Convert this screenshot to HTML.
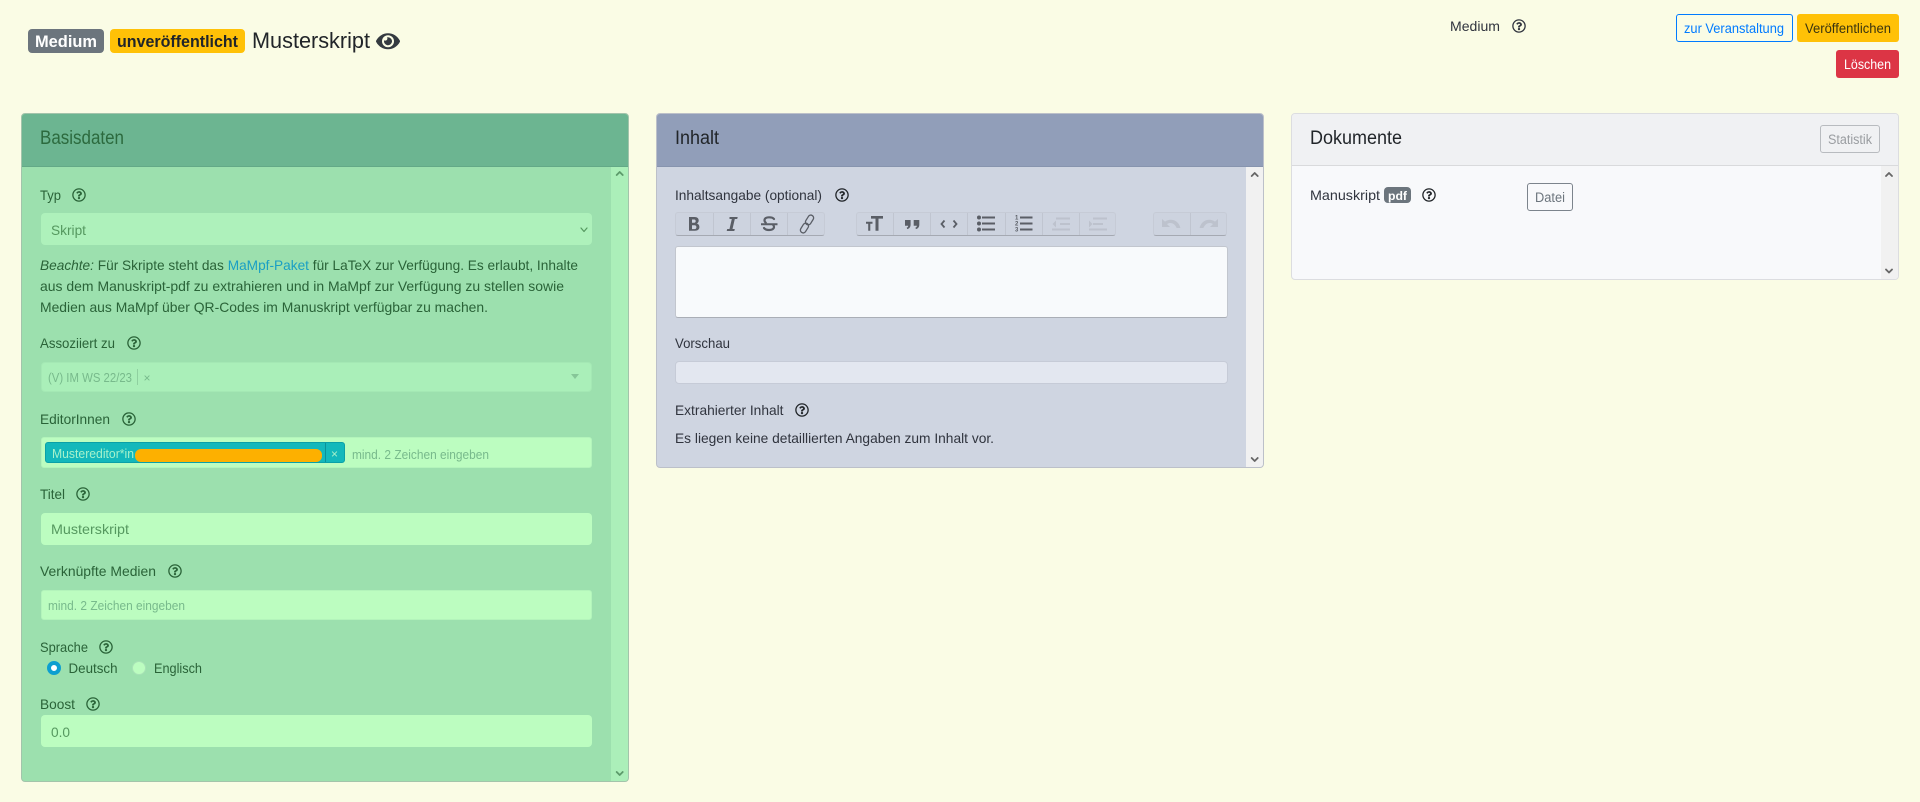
<!DOCTYPE html>
<html lang="de">
<head>
<meta charset="utf-8">
<title>Musterskript</title>
<style>
html,body{margin:0;padding:0;width:1920px;height:802px;overflow:hidden;background:#fafce5}
.b{position:absolute;box-sizing:border-box}
svg.o{position:absolute;left:0;top:0}
text{font-family:"Liberation Sans",sans-serif;font-size:14px}
.lg{fill:#2a6338}
.lb{fill:#30343e}
.ph{fill:#78ba8c;font-size:12.5px}
.val{fill:#55985f}
.c{fill:none;stroke-width:1.8;stroke-linecap:round;stroke-linejoin:round}
</style>
</head>
<body>
<!-- header bits -->
<div class="b" style="left:28px;top:29px;width:76px;height:24px;background:#6c757d;border-radius:4px"></div>
<div class="b" style="left:110px;top:29px;width:135px;height:24px;background:#ffc107;border-radius:4px"></div>
<div class="b" style="left:1676px;top:14px;width:117px;height:28px;border:1px solid #007bff;border-radius:3px"></div>
<div class="b" style="left:1797px;top:14px;width:102px;height:28px;background:#ffc107;border-radius:3px"></div>
<div class="b" style="left:1836px;top:50px;width:63px;height:28px;background:#dc3545;border-radius:3px"></div>

<!-- Basisdaten card -->
<div class="b" style="left:21px;top:113px;width:608px;height:669px;background:#9ce0ae;border:1px solid #a3c4ab;border-radius:4px;overflow:hidden">
  <div class="b" style="left:0;top:0;width:606px;height:52.500px;background:#6cb591;border-bottom:1px solid #63a987"></div>
  <div class="b" style="left:589px;top:52.500px;width:17px;height:615px;background:#abefb9"></div>
</div>
<div class="b" style="left:41px;top:213px;width:551px;height:32px;background:#aef1bb;border-radius:4px"></div>
<div class="b" style="left:41px;top:362px;width:551px;height:30px;background:#aaefb9;border:1px solid #a4e8b4;border-radius:4px"></div>
<div class="b" style="left:41px;top:437px;width:551px;height:31px;background:#bcfdc0;border:1px solid #b3f4bb;border-radius:3px"></div>
<div class="b" style="left:45px;top:442px;width:300px;height:21px;background:#13b8bb;border:1px solid #0aa0a8;border-radius:3px"></div>
<div class="b" style="left:325px;top:443px;width:1px;height:19px;background:#0a9098"></div>
<div class="b" style="left:135px;top:449px;width:187px;height:13px;background:#fdb000;border-radius:6px"></div>
<div class="b" style="left:41px;top:513px;width:551px;height:32px;background:#bcfdc0;border-radius:4px"></div>
<div class="b" style="left:41px;top:590px;width:551px;height:30px;background:#bcfdc0;border:1px solid #b3f4bb;border-radius:3px"></div>
<div class="b" style="left:47px;top:661px;width:14px;height:14px;background:#fff;border:4px solid #0d9fd0;border-radius:50%"></div>
<div class="b" style="left:132px;top:661px;width:14px;height:14px;background:#bcfdc0;border:1px solid #a8e2b6;border-radius:50%"></div>
<div class="b" style="left:41px;top:715px;width:551px;height:32px;background:#bcfdc0;border-radius:4px"></div>

<!-- Inhalt card -->
<div class="b" style="left:656px;top:113px;width:608px;height:355px;background:#cfd5e1;border:1px solid #bcc0c9;border-radius:4px;overflow:hidden">
  <div class="b" style="left:0;top:0;width:606px;height:52.500px;background:#919eb9;border-bottom:1px solid #8794ae"></div>
  <div class="b" style="left:589px;top:52.500px;width:17px;height:301px;background:#f1f1f1"></div>
</div>
<div class="b" style="left:675px;top:212px;width:150px;height:24px;background:#cdd3df;border:1px solid #c6cbd6;border-bottom:1px solid #a5a9b2;border-radius:3px"></div>
<div class="b" style="left:856px;top:212px;width:260px;height:24px;background:#cdd3df;border:1px solid #c6cbd6;border-bottom:1px solid #a5a9b2;border-radius:3px"></div>
<div class="b" style="left:1153px;top:212px;width:74px;height:24px;background:#cdd3df;border:1px solid #c6cbd6;border-bottom:1px solid #a5a9b2;border-radius:3px"></div>
<div class="b" style="left:675px;top:246px;width:553px;height:72px;background:#f8fafc;border:1px solid #c2c6ce;border-bottom-color:#aaaeb6;border-radius:3px"></div>
<div class="b" style="left:675px;top:361px;width:553px;height:23px;background:#e3e7f0;border:1px solid #c6cbd7;border-radius:4px"></div>

<!-- Dokumente card -->
<div class="b" style="left:1291px;top:113px;width:608px;height:167px;background:#f8f9fb;border:1px solid #dcdde0;border-radius:4px;overflow:hidden">
  <div class="b" style="left:0;top:0;width:606px;height:52px;background:#f0f1f3;border-bottom:1px solid #d9dadc"></div>
  <div class="b" style="left:589px;top:52px;width:17px;height:113px;background:#f1f1f1"></div>
</div>
<div class="b" style="left:1820px;top:125px;width:60px;height:28px;border:1px solid #b8bbbf;border-radius:3px"></div>
<div class="b" style="left:1384px;top:187px;width:27px;height:16px;background:#6c757d;border-radius:4px"></div>
<div class="b" style="left:1527px;top:183px;width:46px;height:28px;border:1px solid #7c848c;border-radius:3px"></div>

<svg class="o" width="1920" height="802" viewBox="0 0 1920 802" xmlns="http://www.w3.org/2000/svg">
<defs>
<symbol id="q" viewBox="0 0 512 512"><path fill="currentColor" d="M256 8C119 8 8 119 8 256s111 248 248 248 248-111 248-248S393 8 256 8zm0 448c-110.5 0-200-89.5-200-200S145.5 56 256 56s200 89.5 200 200-89.5 200-200 200zm107.2-255.2c0 67-72.4 68.1-72.4 92.8V300c0 6.6-5.4 12-12 12h-45.6c-6.6 0-12-5.4-12-12v-8.7c0-35.6 27-49.8 47.4-61.3 17.5-9.8 28.2-16.5 28.2-29.5 0-17.2-21.9-28.6-39.7-28.6-23.2 0-33.9 11-49 30-4.1 5.1-11.5 6.1-16.7 2.1l-27.8-21.1c-5.1-3.9-6.3-11.1-2.6-16.4C184.8 131.5 214.9 112 261.8 112c49.1 0 101.4 38.3 101.4 88.8zM298 368c0 23.2-18.8 42-42 42s-42-18.8-42-42 18.8-42 42-42 42 18.8 42 42z"/></symbol>
</defs>

<!-- header -->
<text x="35" y="47" textLength="62" lengthAdjust="spacingAndGlyphs" style="font-size:16.5px;font-weight:bold;fill:#fff">Medium</text>
<text x="117" y="47" textLength="121" lengthAdjust="spacingAndGlyphs" style="font-size:16.5px;font-weight:bold;fill:#212529">unveröffentlicht</text>
<text x="252" y="48" textLength="118" lengthAdjust="spacingAndGlyphs" style="font-size:22px;fill:#212529">Musterskript</text>
<path transform="translate(376 30.6) scale(.0417)" fill="#343a40" d="M572.52 241.4C518.29 135.59 410.93 64 288 64S57.68 135.64 3.48 241.41a32.35 32.35 0 0 0 0 29.19C57.71 376.41 165.07 448 288 448s230.32-71.64 284.52-177.41a32.35 32.35 0 0 0 0-29.19zM288 400a144 144 0 1 1 144-144 143.93 143.93 0 0 1-144 144zm0-240a95.31 95.31 0 0 0-25.31 3.79 47.85 47.85 0 0 1-66.9 66.9A95.78 95.78 0 1 0 288 160z"/>
<text x="1450" y="31" textLength="50" lengthAdjust="spacingAndGlyphs" class="lb">Medium</text>
<use href="#q" x="1512" y="19" width="14" height="14" color="#30343e"/>
<text x="1684" y="33" textLength="100" lengthAdjust="spacingAndGlyphs" style="font-size:13.500px;fill:#007bff">zur Veranstaltung</text>
<text x="1805" y="33" textLength="86" lengthAdjust="spacingAndGlyphs" style="font-size:13.500px;fill:#3a3410">Veröffentlichen</text>
<text x="1844" y="69" textLength="47" lengthAdjust="spacingAndGlyphs" style="font-size:13.500px;fill:#fff">Löschen</text>

<!-- Basisdaten -->
<text x="40" y="144" textLength="84" lengthAdjust="spacingAndGlyphs" style="font-size:19px;fill:#2c6a3e">Basisdaten</text>
<text x="40" y="200" textLength="21" lengthAdjust="spacingAndGlyphs" class="lg">Typ</text>
<use href="#q" x="72" y="188" width="14" height="14" color="#2a6338"/>
<text x="51" y="235" textLength="35" lengthAdjust="spacingAndGlyphs" class="val">Skript</text>
<path class="c" stroke="#55985f" style="stroke-width:1.2" d="M581 228l3 3.500 3-3.500"/>
<text x="40" y="270" textLength="538" lengthAdjust="spacingAndGlyphs" class="lg"><tspan font-style="italic">Beachte:</tspan> Für Skripte steht das <tspan fill="#1a9fc4">MaMpf-Paket</tspan> für LaTeX zur Verfügung. Es erlaubt, Inhalte</text>
<text x="40" y="291" textLength="524" lengthAdjust="spacingAndGlyphs" class="lg">aus dem Manuskript-pdf zu extrahieren und in MaMpf zur Verfügung zu stellen sowie</text>
<text x="40" y="312" textLength="448" lengthAdjust="spacingAndGlyphs" class="lg">Medien aus MaMpf über QR-Codes im Manuskript verfügbar zu machen.</text>

<text x="40" y="348" textLength="75" lengthAdjust="spacingAndGlyphs" class="lg">Assoziiert zu</text>
<use href="#q" x="127" y="336" width="14" height="14" color="#2a6338"/>
<text x="48" y="382" textLength="84" lengthAdjust="spacingAndGlyphs" style="font-size:12.500px;fill:#78ba8c">(V) IM WS 22/23</text>
<rect x="137" y="369" width="1" height="16" fill="#8fd0a0"/>
<text x="143.500" y="382" style="font-size:12px;fill:#78ba8c">×</text>
<path d="M571 374h8l-4 5z" fill="#86c698"/>

<text x="40" y="424" textLength="70" lengthAdjust="spacingAndGlyphs" class="lg">EditorInnen</text>
<use href="#q" x="122" y="412" width="14" height="14" color="#2a6338"/>
<text x="52" y="458" textLength="82" lengthAdjust="spacingAndGlyphs" style="font-size:12.500px;fill:#a5f2cb">Mustereditor*in</text>
<text x="331" y="458" style="font-size:12px;fill:#a5f2cb">×</text>
<text x="352" y="459" textLength="137" lengthAdjust="spacingAndGlyphs" class="ph">mind. 2 Zeichen eingeben</text>

<text x="40" y="499" textLength="25" lengthAdjust="spacingAndGlyphs" class="lg">Titel</text>
<use href="#q" x="76" y="487" width="14" height="14" color="#2a6338"/>
<text x="51" y="534" textLength="78" lengthAdjust="spacingAndGlyphs" class="val">Musterskript</text>

<text x="40" y="576" textLength="116" lengthAdjust="spacingAndGlyphs" class="lg">Verknüpfte Medien</text>
<use href="#q" x="168" y="564" width="14" height="14" color="#2a6338"/>
<text x="48" y="610" textLength="137" lengthAdjust="spacingAndGlyphs" class="ph">mind. 2 Zeichen eingeben</text>

<text x="40" y="652" textLength="48" lengthAdjust="spacingAndGlyphs" class="lg">Sprache</text>
<use href="#q" x="99" y="640" width="14" height="14" color="#2a6338"/>
<text x="68.500" y="673" textLength="49" lengthAdjust="spacingAndGlyphs" class="lg">Deutsch</text>
<text x="154" y="673" textLength="48" lengthAdjust="spacingAndGlyphs" class="lg">Englisch</text>

<text x="40" y="709" textLength="35" lengthAdjust="spacingAndGlyphs" class="lg">Boost</text>
<use href="#q" x="86" y="697" width="14" height="14" color="#2a6338"/>
<text x="51" y="737" textLength="19" lengthAdjust="spacingAndGlyphs" class="val">0.0</text>

<path class="c" stroke="#5c9a6a" d="M616.700 175l3-3 3 3M616.700 772l3 3 3-3"/>

<!-- Inhalt -->
<text x="675" y="144" textLength="44" lengthAdjust="spacingAndGlyphs" style="font-size:19px;fill:#212529">Inhalt</text>
<text x="675" y="200" textLength="147" lengthAdjust="spacingAndGlyphs" class="lb">Inhaltsangabe (optional)</text>
<use href="#q" x="835" y="188" width="14" height="14" color="#212529"/>

<!-- toolbar separators -->
<path stroke="#c0c5d0" stroke-width="1" d="M713.500 213v22M750.500 213v22M787.500 213v22M893.500 213v22M930.500 213v22M967.500 213v22M1005.500 213v22M1042.500 213v22M1079.500 213v22M1190.500 213v22"/>
<!-- B -->
<path fill="#5a5e66" fill-rule="evenodd" d="M689 217h5.600c2.800 0 4.100 1.600 4.100 3.500 0 1.500-.8 2.600-2 3 1.600.4 2.700 1.600 2.700 3.500 0 2.500-1.800 3.700-4.500 3.700H689zM692 219.500v3.300h2.200c1 0 1.500-.7 1.500-1.650s-.5-1.650-1.500-1.650zM692 225.200v3.900h2.600c1.100 0 1.800-.7 1.800-1.950s-.7-1.950-1.800-1.950z"/>
<!-- I -->
<path fill="#5a5e66" d="M729.500 217h8.200l-.5 2h-2.400l-2.300 10h2.300l-.5 2h-7.600l.5-2h2.300l2.300-10h-2.300z"/>
<!-- S -->
<path fill="none" stroke="#5a5e66" stroke-width="2.200" stroke-linecap="round" d="M774 219c-1-1.400-3-1.700-5-1.700-2.600 0-4.500 1.100-4.500 3 0 1 .5 1.800 1.300 2.400M764 228c1 1.500 3 2 5 2 2.700 0 5-1 5-3.100 0-.8-.3-1.400-.8-1.900"/>
<path stroke="#5a5e66" stroke-width="2" d="M761 224.200h16.500"/>
<!-- link -->
<g fill="none" stroke="#5a5e66" stroke-width="1.300" transform="rotate(-58 807 224)"><rect x="797" y="221.200" width="10.500" height="5.600" rx="2.800"/><rect x="806.500" y="221.200" width="10.500" height="5.600" rx="2.800"/></g>
<!-- heading -->
<path fill="#5a5e66" d="M871 216h12v2.600h-4.500v12.100h-3v-12.100H871zM866 221.800h6.500v2h-2.200v6.900h-2.100v-6.900H866z"/>
<!-- quote -->
<path fill="#5a5e66" d="M905 220h5.600v4.600c0 2.400-1.200 3.900-3.400 4.500l-.5-1.500c1-.3 1.500-1 1.500-1.900H905zM913.700 220h5.600v4.600c0 2.400-1.200 3.900-3.400 4.500l-.5-1.500c1-.3 1.500-1 1.500-1.900h-3.200z"/>
<!-- code -->
<path fill="none" stroke="#5a5e66" stroke-width="1.800" d="M944.500 220.500l-3 3.500 3 3.500M953.500 220.500l3 3.500-3 3.500"/>
<!-- ul -->
<g fill="#5a5e66"><circle cx="979" cy="217.500" r="2"/><circle cx="979" cy="223.500" r="2"/><circle cx="979" cy="229.500" r="2"/><rect x="982" y="216.500" width="13" height="2"/><rect x="982" y="222.500" width="13" height="2"/><rect x="982" y="228.500" width="13" height="2"/></g>
<!-- ol -->
<g fill="#5a5e66"><rect x="1020" y="216.500" width="12.500" height="2"/><rect x="1020" y="222.500" width="12.500" height="2"/><rect x="1020" y="228.500" width="12.500" height="2"/></g>
<text x="1015" y="219.500" style="font-size:6px;font-weight:bold;fill:#5a5e66">1</text>
<text x="1015" y="225.500" style="font-size:6px;font-weight:bold;fill:#5a5e66">2</text>
<text x="1015" y="231.500" style="font-size:6px;font-weight:bold;fill:#5a5e66">3</text>
<!-- outdent / indent -->
<g fill="#bdc2cd"><rect x="1056" y="217.500" width="14" height="2"/><rect x="1060" y="223" width="10" height="2"/><rect x="1052" y="228.500" width="18" height="2"/><path d="M1056 220.500l-3.500 3.500 3.500 3.500z"/></g>
<g fill="#bdc2cd"><rect x="1093" y="217.500" width="14" height="2"/><rect x="1093" y="223" width="10" height="2"/><rect x="1089" y="228.500" width="18" height="2"/><path d="M1089 220.500l3.500 3.500-3.500 3.500z"/></g>
<!-- undo / redo -->
<path fill="#bdc2cd" d="M1162 219l0 8 8 0-3-3c1.800-1.200 3.900-1.300 5.700-.5 1.800.8 3 2.500 4 4.500h3.700c-1-4-3.400-6.700-6.400-7.700-3-1-6.200-.6-9 1.300z"/>
<path fill="#bdc2cd" d="M1218 219v8h-8l3-3c-1.800-1.200-3.900-1.300-5.700-.5-1.800.8-3 2.500-4 4.500h-3.700c1-4 3.400-6.700 6.400-7.700 3-1 6.200-.6 9 1.300z"/>

<text x="675" y="348" textLength="55" lengthAdjust="spacingAndGlyphs" class="lb">Vorschau</text>
<text x="675" y="415" textLength="108.500" lengthAdjust="spacingAndGlyphs" class="lb">Extrahierter Inhalt</text>
<use href="#q" x="795" y="403" width="14" height="14" color="#212529"/>
<text x="675" y="443" textLength="319" lengthAdjust="spacingAndGlyphs" class="lb">Es liegen keine detaillierten Angaben zum Inhalt vor.</text>
<path class="c" stroke="#666" d="M1251.700 176l3-3 3 3M1251.700 458l3 3 3-3"/>

<!-- Dokumente -->
<text x="1310" y="144" textLength="92" lengthAdjust="spacingAndGlyphs" style="font-size:19px;fill:#212529">Dokumente</text>
<text x="1828" y="144" textLength="44" lengthAdjust="spacingAndGlyphs" style="font-size:13.500px;fill:#9a9da1">Statistik</text>
<text x="1310" y="200" textLength="70" lengthAdjust="spacingAndGlyphs" class="lb">Manuskript</text>
<text x="1388" y="200" textLength="19" lengthAdjust="spacingAndGlyphs" style="font-size:12px;font-weight:bold;fill:#fff">pdf</text>
<use href="#q" x="1422" y="188" width="14" height="14" color="#212529"/>
<text x="1535" y="202" textLength="30" lengthAdjust="spacingAndGlyphs" style="font-size:13.500px;fill:#6c757d">Datei</text>
<path class="c" stroke="#666" d="M1886 176l3-3 3 3M1886 269.500l3 3 3-3"/>
</svg>
</body>
</html>
